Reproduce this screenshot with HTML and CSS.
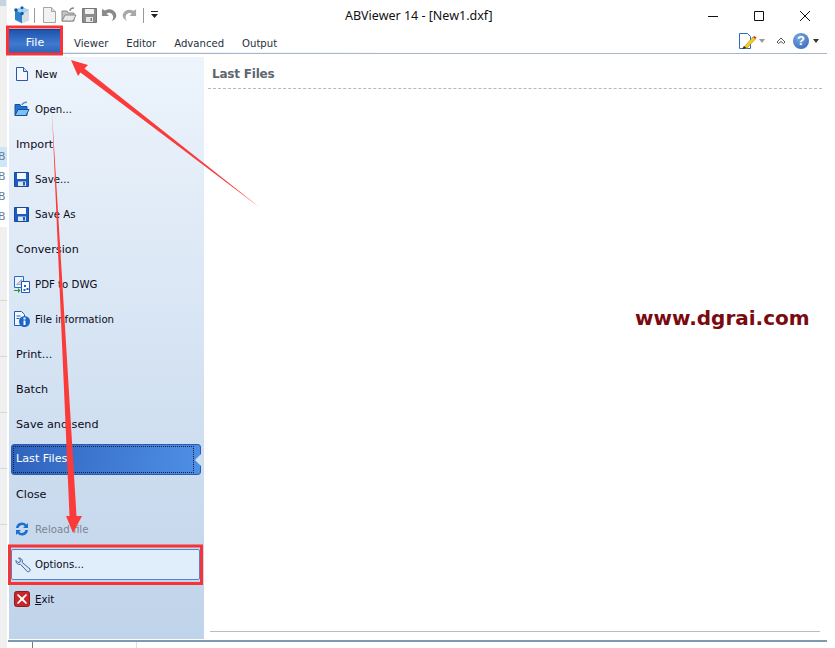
FILE: index.html
```html
<!DOCTYPE html>
<html lang="en">
<head>
<meta charset="utf-8">
<title>ABViewer 14 - [New1.dxf]</title>
<link rel="stylesheet" href="styles.css">
</head>
<body>
<div class="shell">
  <div class="strip">
    <div class="strip-top"></div>
    <div class="strip-rows">
      <div class="strip-b sel">B</div>
      <div class="strip-b">B</div>
      <div class="strip-b">B</div>
      <div class="strip-b">B</div>
    </div>
    <div class="strip-lines">
      <i></i><i></i><i></i><i></i><i></i>
    </div>
  </div>
  <div class="window">
    <header class="titlebar">
      <div class="qat">
        <svg class="q-app" width="18" height="18" viewBox="0 0 18 18"><path d="M9 1l7 3v10l-7 3.500-7-3.500V4z" fill="#7fb4e2"/><path d="M2 4l7 3.500V17l-7-3.500z" fill="#2f7fca"/><path d="M9 7.500l7-3.500v10l-7 3.500z" fill="#d5dde5"/><path d="M2 4l7-3 7 3-7 3.500z" fill="#a8d0ef"/><circle cx="3" cy="4" r="1.800" fill="#0f5fb0"/><circle cx="9" cy="7.500" r="1.800" fill="#0f5fb0"/><circle cx="9" cy="1.800" r="1.500" fill="#0f5fb0"/></svg>
        <span class="q-sep"></span>
        <svg class="q-new" width="13" height="16" viewBox="0 0 13 16"><path d="M.5.500h8l4 4v11H.500z" fill="#f2f2f2" stroke="#a5a5a5"/><path d="M8.500.500v4h4" fill="#ddd" stroke="#a5a5a5"/></svg>
        <svg class="q-open" width="16" height="16" viewBox="0 0 16 16"><path d="M1 4h5l1 2h6v8H1z" fill="#c4c4c4" stroke="#888"/><path d="M1 14l3-6h11l-3 6z" fill="#e9e9e9" stroke="#888"/><path d="M9 4c0-2 2-3 4-3" fill="none" stroke="#888" stroke-width="1.500"/></svg>
        <svg class="q-save" width="15" height="15" viewBox="0 0 15 15"><path d="M.5.500h14v14H.500z" fill="#8c8c8c" stroke="#777"/><path d="M3 1h9v5H3z" fill="#f2f2f2"/><path d="M4 9h7v5H4z" fill="#e6e6e6"/><path d="M8.500 10h1.500v3H8.500z" fill="#777"/></svg>
        <svg class="q-undo" width="16" height="14" viewBox="0 0 16 14"><path d="M1 1v7h7L5.500 5.500C8 4 11 5 12 8c.5 2 0 3.500-1.500 5C14 12 16 9 15 6 13.500 1.500 8 0 4 2.500z" fill="#8a8a8a"/></svg>
        <svg class="q-redo" width="15" height="14" viewBox="0 0 16 14"><path d="M15 1v7H8l2.500-2.500C8 4 5 5 4 8c-.5 2 0 3.500 1.500 5C2 12 0 9 1 6 2.500 1.500 8 0 12 2.500z" fill="#a8a8a8"/></svg>
        <span class="q-sep q-sep2"></span>
        <svg class="q-more" width="7" height="8" viewBox="0 0 7 8"><path d="M0 0h7v1H0z" fill="#222"/><path d="M0 3h7L3.500 7z" fill="#222"/></svg>
      </div>
      <div class="title">ABViewer 14 - [New1.dxf]</div>
      <div class="winctl">
        <svg width="12" height="12" viewBox="0 0 12 12"><path d="M1 6.500h10" stroke="#111" fill="none"/></svg>
        <svg width="12" height="12" viewBox="0 0 12 12"><path d="M1.500 1.500h9v9h-9z" stroke="#111" fill="none"/></svg>
        <svg width="12" height="12" viewBox="0 0 12 12"><path d="M1 1l10 10M11 1L1 11" stroke="#111" fill="none"/></svg>
      </div>
    </header>
    <nav class="tabs">
      <div class="tab tab-file">File</div>
      <div class="tab">Viewer</div>
      <div class="tab">Editor</div>
      <div class="tab">Advanced</div>
      <div class="tab">Output</div>
      <div class="tab-tools">
        <svg width="18" height="17" viewBox="0 0 18 17"><path d="M.5.500h8l3 3v12H.500z" fill="#fff" stroke="#2a6ac4"/><path d="M5 14l9-10 2.500 2-9 9.500z" fill="#f0d020" stroke="#b58a10" stroke-width=".6"/><path d="M3 16l2-3 2.500 2z" fill="#333"/><path d="M14 4l2.500 2 1-1.500L15.500 3z" fill="#d83030"/></svg>
        <span class="caret caret-grey"></span>
        <svg class="t-up" width="10" height="8" viewBox="0 0 10 8"><path d="M1 5l4-4 4 4-1.500 1.500L5 4.500 2.500 6.500z" fill="#fff" stroke="#555"/></svg>
        <span class="help">?</span>
        <span class="caret"></span>
      </div>
    </nav>
    <div class="content">
      <aside class="menu">
        <div class="item icon-item">
          <svg width="16" height="16" viewBox="0 0 16 16"><path d="M2.500 1.500h7l4 4v9h-11z" fill="#f4f8fe" stroke="#2a58a8"/><path d="M9.500 1.500v4h4" fill="#cfe0f5" stroke="#2a58a8"/></svg>
          <span>New</span>
        </div>
        <div class="item icon-item">
          <svg width="16" height="16" viewBox="0 0 16 16"><path d="M1 3.500h5l1 2h6v9H1z" fill="#1f76d2" stroke="#14509c"/><path d="M1 14.500l3-6h11l-3 6z" fill="#7fc0f2" stroke="#14509c"/><path d="M8 4c.5-2 3-3 5-2.500" fill="none" stroke="#5a8fc4" stroke-width="1.500"/></svg>
          <span>Open...</span>
        </div>
        <div class="item head">Import</div>
        <div class="item icon-item">
          <svg width="16" height="16" viewBox="0 0 16 16"><path d="M.5 1.500h14v14H.500z" fill="#1c5cc0" stroke="#174a9c"/><path d="M3 2h9v6H3z" fill="#f6f8fb"/><path d="M4 10.500h8V15H4z" fill="#dfe5ec"/><path d="M9 11h2v3.500H9z" fill="#1c5cc0"/></svg>
          <span>Save...</span>
        </div>
        <div class="item icon-item">
          <svg width="16" height="16" viewBox="0 0 16 16"><path d="M.5 1.500h14v14H.500z" fill="#1c5cc0" stroke="#174a9c"/><path d="M3 2h9v6H3z" fill="#f6f8fb"/><path d="M4 10.500h8V15H4z" fill="#dfe5ec"/><path d="M9 11h2v3.500H9z" fill="#1c5cc0"/></svg>
          <span>Save As</span>
        </div>
        <div class="item head">Conversion</div>
        <div class="item icon-item">
          <svg width="16" height="17" viewBox="0 0 16 17"><path d="M.5.500h9v11h-9z" fill="#eef4fb" stroke="#2a6ac4"/><path d="M2.500 8.500l5-5v5z" fill="#c9d3df" stroke="#8a97a6" stroke-width=".7"/><path d="M7.500 5.500h8v11h-8z" fill="#fff" stroke="#1c5cc0"/><path d="M10 9h2v2h-2zM12.500 12h2v2h-2zM9.500 13h2v2h-2z" fill="#1c5cc0"/><path d="M0 14h4V12l2.500 2.500L4 17v-2H0z" fill="#2c9a2c"/></svg>
          <span>PDF to DWG</span>
        </div>
        <div class="item icon-item">
          <svg width="16" height="16" viewBox="0 0 16 16"><path d="M.5.500h7l3 3v11h-10z" fill="#f4f8fe" stroke="#1c5cc0"/><path d="M2.500 5h4M2.500 7.500h3" stroke="#1c5cc0" fill="none"/><circle cx="10.500" cy="10.500" r="5.500" fill="#1c66c6"/><path d="M9.500 6.500h2v2h-2zM9.500 9.500h2v4.500h-2z" fill="#fff"/></svg>
          <span>File information</span>
        </div>
        <div class="item head">Print...</div>
        <div class="item head">Batch</div>
        <div class="item head">Save and send</div>
        <div class="item head current"><span>Last Files</span></div>
        <div class="item head">Close</div>
        <div class="item icon-item disabled">
          <svg width="16" height="16" viewBox="0 0 16 16"><path d="M2 7a6 6 0 0 1 10.500-3.500L14 2v5H9l1.700-1.700A3.500 3.500 0 0 0 4.600 7z" fill="#1d6fd0"/><path d="M14 9a6 6 0 0 1-10.500 3.500L2 14V9h5l-1.700 1.700A3.500 3.500 0 0 0 11.400 9z" fill="#1d6fd0"/></svg>
          <span>Reload file</span>
        </div>
        <div class="item icon-item hovered">
          <svg width="16" height="16" viewBox="0 0 16 16"><path d="M3.500 1a3.500 3.500 0 0 1 3.800 4.500l7.700 6.500a2 2 0 0 1-2.700 2.600L5.500 7.300A3.500 3.500 0 0 1 1 3.500L3 5.500l2-.5.500-2z" fill="#dbe6f2" stroke="#3f6aa0"/></svg>
          <span>Options...</span>
        </div>
        <div class="item icon-item">
          <svg width="16" height="16" viewBox="0 0 16 16"><rect x=".5" y=".5" width="15" height="15" rx="2" fill="#c8272a" stroke="#8f1b1e"/><path d="M4 3l4 3.500L12 3l1 1-3.500 4L13 12l-1 1-4-3.500L4 13l-1-1 3.500-4L3 4z" fill="#fff"/></svg>
          <span><u>E</u>xit</span>
        </div>
      </aside>
      <main class="pane">
        <h1 class="pane-title">Last Files</h1>
        <div class="pane-list"></div>
        <div class="pane-foot"></div>
      </main>
    </div>
    <div class="status"></div>
    <div class="under"><i></i><i></i></div>
  </div>
</div>
<div class="watermark">www.dgrai.com</div>
<svg class="marks" width="835" height="648" viewBox="0 0 835 648">
  <rect class="box" x="7.500" y="27" width="54" height="27"/>
  <rect class="box" x="9.500" y="546" width="192" height="37.500"/>
  <path class="arrow" d="M71 60L88 65 84.500 68.500 259 207 80.500 72.500 78 76z"/>
  <path class="arrow" d="M52 113L76.500 516 82 516 73 533 66 516 69.500 516z"/>
</svg>
</body>
</html>
```

FILE: styles.css
```css
html, body { margin: 0; padding: 0; background: #fff; }
body { width: 835px; height: 648px; overflow: hidden; position: relative; font-family: "DejaVu Sans", sans-serif; color: #0c0c20; }
.shell { display: flex; height: 648px; width: 827px; }

.strip { width: 7px; flex: none; background: #f0f0f0; overflow: hidden; }
.strip-top { height: 6px; width: 6px; background: #c8d2de; margin-bottom: 141px; }
.strip-rows { display: flex; flex-direction: column; }
.strip-b { height: 20px; line-height: 20px; font-size: 11px; color: #6f7f90; text-indent: -2px; background: #fff; }
.strip-b.sel { background: #cfe6f8; }
.strip-lines { display: flex; flex-direction: column; margin-top: 73px; }
.strip-lines i { display: block; height: 1px; background: #d8d8d8; margin-bottom: 55px; }

.window { flex: 1; display: flex; flex-direction: column; padding-left: 2px; min-width: 0; margin-left: 0; }

.titlebar { height: 24px; flex: none; position: relative; display: flex; align-items: center; }
.qat { display: flex; align-items: center; padding-left: 4px; height: 24px; padding-top: 6px; box-sizing: border-box; }
.q-sep { width: 1px; height: 15px; background: #9a9a9a; margin: 0 8px 0 3px; }
.q-new { margin-right: 5px; }
.q-open { margin-right: 5px; }
.q-save { margin-right: 4px; }
.q-undo { margin-right: 5px; }
.q-redo { margin-right: 6px; }
.q-sep2 { margin: 0 7px 0 0; }
.title { position: absolute; left: 336px; top: 7px; font: 12.500px/18px "Noto Sans", sans-serif; color: #111; white-space: nowrap; }
.winctl { margin-left: auto; display: flex; gap: 34px; padding-right: 16px; padding-top: 7px; }

.tabs { height: 29px; flex: none; display: flex; align-items: flex-end; border-bottom: 1px solid #a8b6c6; background: linear-gradient(90deg, #dbe9fa, #fff 60%, #fff); background-size: 100% 1px; background-position: bottom; background-repeat: no-repeat; box-sizing: content-box; }
.tab { font: 10.100px/29px "DejaVu Sans", sans-serif; color: #26303c; padding: 0 9px; margin-right: 0; height: 24px; }
.tab-file { width: 52px; box-sizing: border-box; text-align: center; padding: 0; color: #fff; margin-right: 4px; background: linear-gradient(#1e53ad, #3f7ad0 60%, #2d63b8); border-top: 1px solid #1a3f8c; font-size: 11px; line-height: 26px; }
.tab-tools { margin-left: auto; display: flex; align-items: center; height: 24px; padding-right: 8px; }
.caret { width: 0; height: 0; border: 3.500px solid transparent; border-top: 4px solid #333; border-bottom: 0; margin-left: 4px; }
.caret-grey { border-top-color: #999; margin-left: 2px; margin-right: 11px; }
.t-up { margin-right: 7px; }
.help { width: 16px; height: 16px; border-radius: 50%; background: radial-gradient(circle at 40% 30%, #7ba9e2, #2e62b4); color: #fff; font: bold 13px/16px "Liberation Sans", sans-serif; text-align: center; }

.content { flex: 1; display: flex; margin-top: 3px; min-height: 0; }
.menu { width: 195px; flex: none; display: flex; flex-direction: column; background: linear-gradient(#edf4fc, #bfd3ea); }
.item { height: 35px; flex: none; display: flex; align-items: center; box-sizing: border-box; font-size: 11px; white-space: nowrap; padding-bottom: 1px; }
.icon-item { padding-left: 5px; gap: 5px; font-size: 10.200px; }
.icon-item svg { flex: none; }
.head { padding-left: 7px; font-size: 11.200px; }
.current { position: relative; margin: 2px 3px 2px 2px; height: 31px; padding-left: 5px; padding-bottom: 0; color: #fff; border: 1px solid #2c5cae; border-radius: 3px; background: linear-gradient(100deg, #2f63bd, #4f8fe6); }
.current span { flex: 1; align-self: stretch; display: flex; align-items: center; border: 1px dotted #10204a; margin: 1px 6px 1px -4px; padding-left: 2px; padding-bottom: 2px; }
.current::after { content: ""; position: absolute; right: -1px; top: 9px; border: 6px solid transparent; border-right: 6px solid #d2e1f2; border-left: 0; }
.disabled { color: #7d8690; }
.hovered { margin: 2px 4px 2px 2px; height: 31px; padding-left: 3px; padding-bottom: 0; gap: 4px; border: 1px solid #5b82c4; border-radius: 2px; background: #e0eefc; }

.pane { flex: 1; display: flex; flex-direction: column; padding-left: 4px; padding-right: 5px; min-width: 0; }
.pane-title { margin: 0 0 0 4px; font: bold 12px/35px "DejaVu Sans", sans-serif; letter-spacing: -.2px; color: #5e6670; height: 31px; }
.pane-list { flex: 1; border-top: 1px dashed #b8b8b8; }
.pane-foot { height: 7px; border-top: 1px solid #bcbcbc; margin: 0 2px 0 2px; }

.status { height: 2px; flex: none; background: #7e99b4; margin-top: 1px; margin-left: -1px; }
.under { height: 6px; flex: none; display: flex; margin-left: 23px; }
.under i { display: block; width: 1px; background: #777; margin-right: 103px; }
.under i + i { background: #ddd; }

.watermark { position: absolute; left: 635px; top: 304px; font: bold 20px/28px "DejaVu Sans", sans-serif; color: #7a0a10; white-space: nowrap; }
.marks { position: absolute; left: 0; top: 0; pointer-events: none; }
.box { fill: none; stroke: #f73336; stroke-width: 3; }
.arrow { fill: #fb3a3a; }
```
